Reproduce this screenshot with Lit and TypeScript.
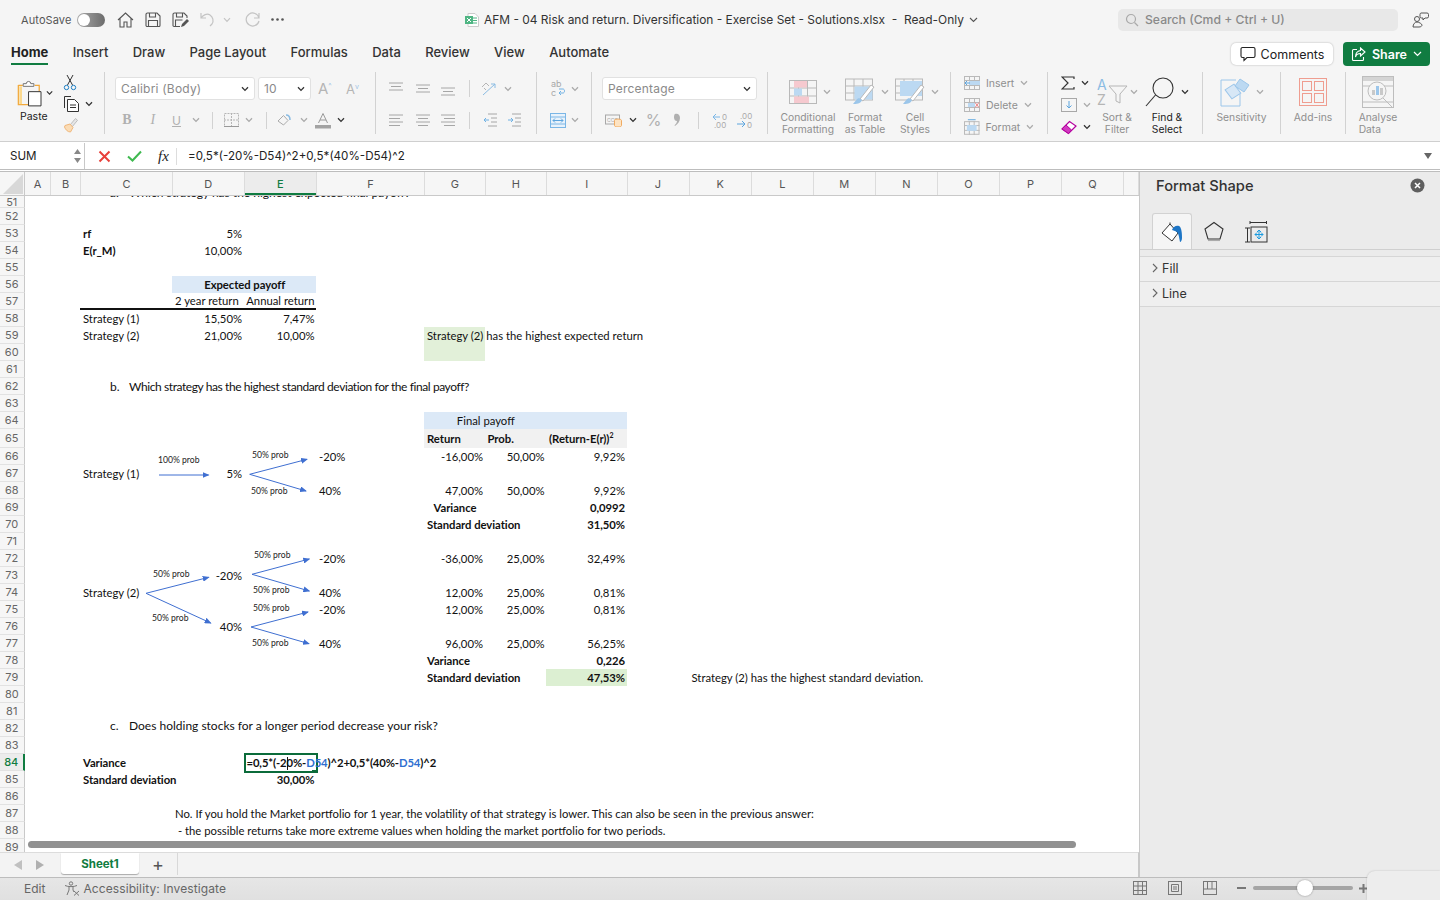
import { LitElement, html, svg, css } from "lit";
import { customElement } from "lit/decorators.js";

const UI = `Inter, "Liberation Sans", sans-serif`;

const chev = (dark = false) => html`<svg width="8" height="6" viewBox="0 0 8 6" fill="none" stroke=${dark ? "#333" : "#aaa"} stroke-width="1.3"><path d="M1 1.2 4 4.4 7 1.2" /></svg>`;

const lines = (y: number[], x: [number, number][]) => html`<svg width="16" height="16" viewBox="0 0 16 16" stroke="#a6a6a6" stroke-width="1">${y.map((v, i) => svg`<line x1=${x[i][0]} x2=${x[i][1]} y1=${v} y2=${v}></line>`)}</svg>`;

@customElement("xl-ribbon")
export class XlRibbon extends LitElement {
  static styles = css`
    :host {
      display: flex;
      height: 76px;
      box-sizing: border-box;
      padding-top: 6px;
      background: #f5f5f5;
      border-bottom: 1px solid #cfcfcf;
      font-family: Inter, "Liberation Sans", sans-serif;
      color: #8f8f8f;
      font-size: 10.3px;
    }
    .group {
      height: 62px;
      border-right: 1px solid #d2d2d2;
      display: flex;
      flex: none;
      box-sizing: content-box;
    }
    .g-clip { width: 104px; }
    .g-font { width: 270px; }
    .g-align { width: 160px; }
    .g-wrap { width: 54px; }
    .g-num { width: 175px; }
    .g-styles { width: 279px; }
    .g-edit { width: 154px; }
    .g-sens { width: 77px; }
    .g-add { width: 64px; }
    .g-ana { width: 64px; border-right: 0; }

    .paste {
      margin-left: 17px;
      width: 36px;
      display: flex;
      flex-direction: column;
      color: #222;
    }
    .paste-top { display: flex; align-items: center; gap: 4px; height: 39px; padding-top: 3px; box-sizing: border-box; }
    .paste span { margin-left: 3px; font-size: 10.5px; line-height: 12px; }
    .clip-tools { margin-left: 10px; display: flex; flex-direction: column; gap: 4px; padding-top: 2px; }
    .clip-tools div { height: 17px; display: flex; align-items: center; gap: 5px; }

    .stack { display: flex; flex-direction: column; gap: 8.5px; padding-top: 5px; }
    .r { height: 23px; display: grid; align-items: center; justify-items: center; }
    .sel {
      background: #fff;
      border: 1px solid #e1e1e1;
      border-radius: 3px;
      height: 23px;
      box-sizing: border-box;
      display: flex;
      align-items: center;
      justify-content: space-between;
      padding: 0 5px;
      font-size: 12px;
      color: #8a8a8a;
      letter-spacing: 0.2px;
    }
    .font-top { display: flex; align-items: center; padding-left: 10px; }
    .font-top .s1 { width: 140px; margin-right: 3px; }
    .font-top .s2 { width: 53px; margin-right: 7px; }
    .grow { font-size: 15px; color: #b5b5b5; width: 28px; }
    .shrink { font-size: 13px; color: #b5b5b5; width: 20px; }
    .grow sup, .shrink sup { font-size: 7px; color: #9cc3e6; }
    .font-bot { padding-left: 9px; grid-template-columns: 26px 25.5px 22px 16.5px 17.5px 19.5px 16px 18px 19.5px 18.5px 19px 18px; font-size: 13px; color: #b0b0b0; }
    .vsep { width: 1px; height: 17px; background: #d2d2d2; }
    .b { font-weight: 700; font-family: "Liberation Serif", serif; font-size: 14px; }
    .i { font-style: italic; font-family: "Liberation Serif", serif; font-size: 14px; }
    .u { text-decoration: underline; font-size: 12px; }

    .align-top { padding-left: 7px; grid-template-columns: 26.5px 26.5px 23px 20px 20px 18px; }
    .align-bot { padding-left: 7px; grid-template-columns: 26.5px 26.5px 23px 20px 22px 26px; }
    .wrap-row { padding-left: 12px; grid-template-columns: 18px 16px; }
    .num-top { padding-left: 10px; display: flex; align-items: center; }
    .num-top .sel { width: 155px; }
    .num-bot { padding-left: 12px; grid-template-columns: 19px 19px 23px 23.5px 20px 23px 26.5px; font-size: 16px; color: #b0b0b0; }

    .bigs { display: flex; padding-left: 10px; width: 172px; flex: none; border-right: 1px solid #d2d2d2; }
    .big { display: flex; flex-direction: column; align-items: center; text-align: center; line-height: 12px; flex: none; }
    .big-top { height: 39px; display: flex; align-items: center; gap: 6px; flex: none; }
    .nudge { margin-left: 4px; }
    .tight { gap: 2px; }
    .w60 { width: 60px; }
    .w54 { width: 54px; }
    .w46 { width: 46px; }
    .dark { color: #222; }

    .cellcol { display: flex; flex-direction: column; padding: 0 0 0 13px; }
    .cellcol div { height: 22px; flex: none; display: flex; align-items: center; gap: 6px; font-size: 10.5px; width: 70px; }
    .edit-col { display: flex; flex-direction: column; padding-left: 13px; width: 37px; flex: none; }
    .edit-col div { height: 22px; flex: none; display: flex; align-items: center; gap: 6px; }
    .e-big { width: 38px; }
    .e-big2 { width: 52px; margin-left: 5px; }
    .single { flex: 1; display: flex; flex-direction: column; align-items: center; line-height: 12px; }
  `;

  render() {
    return html`
      <div class="group g-clip">
        <div class="paste">
          <div class="paste-top">
            <svg width="28" height="30" viewBox="0 0 28 30" fill="none">
              <path d="M1.5 6.5h5M20 6.5h5v7" stroke="#f2a93b" stroke-width="1.4" />
              <path d="M1.5 6v22h11" stroke="#f2a93b" stroke-width="1.4" />
              <path d="M2.6 7.5h3v20h-3z" fill="#fbd98f" />
              <path d="M7 6.5V4.5h3.5a2.5 2.5 0 0 1 5 0H19v3H7z" fill="#fff" stroke="#666" stroke-width="1" />
              <path d="M13 13.5h14v16H13z" fill="#fff" stroke="#333" stroke-width="1.1" />
            </svg>
            ${chev(true)}
          </div>
          <span>Paste</span>
        </div>
        <div class="clip-tools">
          <div>
            <svg width="14" height="17" viewBox="0 0 14 17" fill="none" stroke="#333" stroke-width="1">
              <path d="M4 1l5.5 10M10 1 4.5 11" />
              <circle cx="3.5" cy="13.5" r="2.2" stroke="#1d7fc4" />
              <circle cx="10.5" cy="13.5" r="2.2" stroke="#1d7fc4" />
            </svg>
          </div>
          <div>
            <svg width="17" height="17" viewBox="0 0 17 17" fill="none" stroke="#333" stroke-width="1">
              <path d="M1.5 13V1.5H8" />
              <path d="M4.5 4.5h7l4 4v8h-11z" fill="#fff" />
              <path d="M7 10h6M7 12.5h6" />
            </svg>
            ${chev(true)}
          </div>
          <div>
            <svg width="16" height="16" viewBox="0 0 16 16" fill="none">
              <path d="M7 8 12.5 1.5l2 1.8L9 10z" stroke="#bdbdbd" fill="#e6e6e6" />
              <path d="M2 8.5 7 7l3 3.5-2.5 4.5c-3 0-5-2.5-6-5z" fill="#fbdcb5" stroke="#f0b77a" />
            </svg>
          </div>
        </div>
      </div>

      <div class="group g-font">
        <div class="stack">
          <div class="font-top">
            <div class="sel s1">Calibri (Body) ${chev(true)}</div>
            <div class="sel s2">10 ${chev(true)}</div>
            <span class="grow">A<sup>^</sup></span>
            <span class="shrink">A<sup>v</sup></span>
          </div>
          <div class="r font-bot">
            <span class="b">B</span>
            <span class="i">I</span>
            <span class="u">U</span>
            ${chev()}
            <div class="vsep"></div>
            <svg width="17" height="16" viewBox="0 0 17 16" fill="none" stroke="#b5b5b5"><path d="M1.5 1.5h14v13h-14z" stroke-dasharray="2 1" /><path d="M8.5 1v14M1 8h15" stroke-dasharray="2 1" /><path d="M1 14.5h15" stroke="#999" /></svg>
            ${chev()}
            <div class="vsep"></div>
            <svg width="15" height="15" viewBox="0 0 15 15" fill="none"><path d="M1 8 6.5 2.5 11 7.5 6.5 12z" stroke="#aaa" /><path d="M9 2c2.5 0 4 2 4 5" stroke="#8bbce3" stroke-width="1.6" /></svg>
            ${chev()}
            <svg width="16" height="17" viewBox="0 0 16 17" fill="none"><path d="M3.5 11 8 1.5 12.5 11M5 8h6" stroke="#999" /><rect x="0" y="13" width="16" height="3.5" fill="#a3a3a3" /></svg>
            ${chev(true)}
          </div>
        </div>
      </div>

      <div class="group g-align">
        <div class="stack">
          <div class="r align-top">
            ${lines([2, 5.5, 9], [[1, 15], [3, 13], [1, 15]])}
            ${lines([4, 7.5, 11], [[1, 15], [3, 13], [1, 15]])}
            ${lines([7, 10.5, 14], [[1, 15], [3, 13], [1, 15]])}
            <div class="vsep"></div>
            <svg width="17" height="15" viewBox="0 0 17 15" fill="none"><path d="M2 14 14 3M14 3h-4M14 3v4" stroke="#8bbce3" /><path d="M1 6 5 2l3 3M3 7l2 2" stroke="#b5b5b5" /></svg>
            ${chev()}
          </div>
          <div class="r align-bot">
            ${lines([3, 6.5, 10, 13.5], [[1, 15], [1, 12], [1, 15], [1, 12]])}
            ${lines([3, 6.5, 10, 13.5], [[1, 15], [3, 13], [1, 15], [3, 13]])}
            ${lines([3, 6.5, 10, 13.5], [[1, 15], [4, 15], [1, 15], [4, 15]])}
            <div class="vsep"></div>
            <svg width="15" height="14" viewBox="0 0 15 14" fill="none"><path d="M5 1h9M8 5h6M8 9h6M5 13h9" stroke="#a6a6a6" /><path d="M1 7h5M1 7l2-2M1 7l2 2" stroke="#6fb1e4" /></svg>
            <svg width="15" height="14" viewBox="0 0 15 14" fill="none"><path d="M5 1h9M8 5h6M8 9h6M5 13h9" stroke="#a6a6a6" /><path d="M1 7h5M6 7 4 5M6 7 4 9" stroke="#6fb1e4" /></svg>
          </div>
        </div>
      </div>

      <div class="group g-wrap">
        <div class="stack">
          <div class="r wrap-row">
            <svg width="16" height="19" viewBox="0 0 16 19" fill="none"><text x="1" y="8" font-size="9" fill="#a8a8a8" font-family=${UI}>ab</text><text x="1" y="17" font-size="9" fill="#a8a8a8" font-family=${UI}>c</text><path d="M9 14h4c2 0 2-4 0-4H9M9 14l2-2M9 14l2 2" stroke="#6fb1e4" /></svg>
            ${chev()}
          </div>
          <div class="r wrap-row">
            <svg width="16" height="15" viewBox="0 0 16 15" fill="none"><rect x="0.5" y="0.5" width="15" height="14" stroke="#7ab6e6" fill="#e8f2fb" /><path d="M0 4h16M0 11h16" stroke="#7ab6e6" /><path d="M3 7.5h10M3 7.5l2-2M3 7.5l2 2M13 7.5l-2-2M13 7.5l-2 2" stroke="#5da5de" /></svg>
            ${chev()}
          </div>
        </div>
      </div>

      <div class="group g-num">
        <div class="stack">
          <div class="num-top"><div class="sel">Percentage ${chev(true)}</div></div>
          <div class="r num-bot">
            <svg width="17" height="14" viewBox="0 0 17 14" fill="none"><rect x="0.5" y="2" width="14" height="9" stroke="#a8a8a8" /><text x="2" y="9" font-size="5" fill="#a8a8a8" font-family=${UI}>CCC</text><ellipse cx="13" cy="7.5" rx="3.5" ry="1.5" fill="#fde3c2" stroke="#f0ab62" /><path d="M9.5 7.5v5c0 2 7 2 7 0v-5" fill="#fde3c2" stroke="#f0ab62" /></svg>
            ${chev(true)}
            <span>%</span>
            <svg width="8" height="14" viewBox="0 0 8 14"><path d="M2 1c3-1 5 1 5 4 0 3-2 6-5 8l-.5-.8C3 11 4 9.5 4 8 2.5 8 1 7 1 4.5 1 3 1.2 1.5 2 1z" fill="#b0b0b0" /></svg>
            <div class="vsep"></div>
            <svg width="17" height="17" viewBox="0 0 17 17" fill="none"><path d="M1 5h7M1 5l3-3M1 5l3 3" stroke="#7ab6e6" /><text x="10" y="8" font-size="8" fill="#aaa" font-family=${UI}>0</text><text x="2" y="16" font-size="8" fill="#aaa" font-family=${UI}>.00</text></svg>
            <svg width="17" height="17" viewBox="0 0 17 17" fill="none"><text x="4" y="7" font-size="8" fill="#aaa" font-family=${UI}>.00</text><path d="M1 12h8M9 12 6 9M9 12l-3 3" stroke="#5da5de" /><text x="11" y="16" font-size="8" fill="#aaa" font-family=${UI}>0</text></svg>
          </div>
        </div>
      </div>

      <div class="group g-styles">
        <div class="bigs">
          <div class="big w60">
            <div class="big-top nudge">
              <svg width="28" height="24" viewBox="0 0 28 24" fill="none" stroke="#b9b9b9"><rect x="0.5" y="0.5" width="27" height="23" /><path d="M9.5 0v24M18.5 0v24M0 8h28M0 16h28" /><rect x="5" y="1" width="13" height="6.5" fill="#f6c9cf" stroke="none" /><rect x="5" y="8.5" width="8" height="7" fill="#bcd9f2" stroke="none" /><rect x="5" y="16.5" width="15" height="6.5" fill="#f6c9cf" stroke="none" /></svg>
              ${chev()}
            </div>
            Conditional<br />Formatting
          </div>
          <div class="big w54">
            <div class="big-top nudge">
              <svg width="30" height="27" viewBox="0 0 30 27" fill="none" stroke="#b9b9b9"><rect x="0.5" y="1" width="27" height="21" /><path d="M9 1v21M18 1v21M0 8h28M0 15h28" /><rect x="9.5" y="8.5" width="18" height="13" fill="#bcd9f2" stroke="none" /><path d="M15 21 26 7l3 2-11 14z" fill="#fff" /><path d="M8 26c3 0 8 0 9-4l-3-2c-3 1-4 4-6 6z" fill="#9cc6ea" stroke="none" /></svg>
              ${chev()}
            </div>
            Format<br />as Table
          </div>
          <div class="big w46">
            <div class="big-top nudge">
              <svg width="30" height="27" viewBox="0 0 30 27" fill="none" stroke="#b9b9b9"><rect x="0.5" y="1" width="27" height="21" /><path d="M0 8h28M0 15h28M9 1v5M18 1v5" /><rect x="5" y="3" width="22" height="15" fill="#bcd9f2" stroke="none" /><path d="M15 21 26 7l3 2-11 14z" fill="#fff" /><path d="M8 26c3 0 8 0 9-4l-3-2c-3 1-4 4-6 6z" fill="#9cc6ea" stroke="none" /></svg>
              ${chev()}
            </div>
            Cell<br />Styles
          </div>
        </div>
        <div class="cellcol">
          <div>
            <svg width="16" height="14" viewBox="0 0 16 14" fill="none" stroke="#b9b9b9"><rect x="0.5" y="0.5" width="15" height="13" /><path d="M5.5 0v14M10.5 0v14M0 4.5h16M0 9.5h16" /><rect x="5" y="5" width="11" height="4" fill="#bcd9f2" stroke="none" /><path d="M1 7h5M1 7l2-2M1 7l2 2" stroke="#5da5de" /></svg>
            Insert ${chev()}
          </div>
          <div>
            <svg width="16" height="14" viewBox="0 0 16 14" fill="none" stroke="#b9b9b9"><rect x="0.5" y="0.5" width="15" height="13" /><path d="M5.5 0v14M10.5 0v14M0 4.5h16M0 9.5h16" /><rect x="4" y="5" width="7" height="4" fill="#bcd9f2" stroke="none" /><path d="M11 4.5l4 5M15 4.5l-4 5" stroke="#e88" /></svg>
            Delete ${chev()}
          </div>
          <div>
            <svg width="16" height="16" viewBox="0 0 16 16" fill="none" stroke="#b9b9b9"><rect x="0.5" y="2.5" width="15" height="13" /><path d="M5.5 2v14M10.5 2v14M0 6.5h16M0 11.5h16" /><rect x="3" y="6" width="10" height="6" fill="#bcd9f2" stroke="none" /><path d="M4 .5h8" stroke="#5da5de" /></svg>
            Format ${chev()}
          </div>
        </div>
      </div>

      <div class="group g-edit">
        <div class="edit-col">
          <div>
            <svg width="14" height="14" viewBox="0 0 14 14" fill="none" stroke="#333" stroke-width="1.2"><path d="M13 3V1H1l6 6-6 6h12v-2" /></svg>
            ${chev(true)}
          </div>
          <div>
            <svg width="16" height="14" viewBox="0 0 16 14" fill="none"><rect x="0.5" y="0.5" width="15" height="13" stroke="#a8a8a8" /><path d="M8 3v7M8 10 5.5 7.5M8 10l2.5-2.5" stroke="#5da5de" /></svg>
            ${chev()}
          </div>
          <div>
            <svg width="16" height="15" viewBox="0 0 16 15" fill="none"><path d="M1 9 8.5 1.5 15 6 7.5 13.5z" fill="#fff" stroke="#b4009e" stroke-width="1.2" /><path d="M1 9 5 5l5.5 5-3 3.5z" fill="#d13ac0" stroke="#b4009e" /></svg>
            ${chev(true)}
          </div>
        </div>
        <div class="big e-big">
          <div class="big-top tight">
            <svg width="31" height="30" viewBox="0 0 31 30" fill="none"><text x="0" y="13" font-size="14" fill="#8bbce3" font-family=${UI}>A</text><text x="0" y="28" font-size="14" fill="#b5b5b5" font-family=${UI}>Z</text><path d="M12 9h18l-7 8v9l-4-2v-7z" stroke="#b5b5b5" /></svg>
            ${chev()}
          </div>
          Sort &amp;<br />Filter
        </div>
        <div class="big e-big2 dark">
          <div class="big-top">
            <svg width="30" height="30" viewBox="0 0 30 30" fill="none" stroke="#333" stroke-width="1.1"><circle cx="18" cy="11" r="10" /><path d="M10.5 18 1 29" /></svg>
            ${chev(true)}
          </div>
          Find &amp;<br />Select
        </div>
      </div>

      <div class="group g-sens">
        <div class="single">
          <div class="big-top">
            <svg width="30" height="30" viewBox="0 0 30 30" fill="none" stroke="#9cc6ea"><path d="M16 3H1v26h19v-12" /><path d="M5 14 13 7l8 8-8 7z" fill="#d7e7f6" transform="rotate(8 13 14)" /><path d="M20 2 29 8l-5 7-9-6z" fill="#bcd9f2" /></svg>
            ${chev()}
          </div>
          Sensitivity
        </div>
      </div>

      <div class="group g-add">
        <div class="single">
          <div class="big-top">
            <svg width="28" height="28" viewBox="0 0 28 28" fill="none" stroke="#ef9d90"><rect x="0.5" y="0.5" width="27" height="27" /><rect x="3.5" y="3.5" width="9" height="9" /><rect x="15.5" y="3.5" width="9" height="9" /><rect x="3.5" y="15.5" width="9" height="9" /><rect x="15.5" y="15.5" width="9" height="9" /></svg>
          </div>
          Add-ins
        </div>
      </div>

      <div class="group g-ana">
        <div class="single">
          <div class="big-top">
            <svg width="32" height="32" viewBox="0 0 32 32" fill="none" stroke="#bdbdbd"><rect x="0.5" y="0.5" width="31" height="31" /><rect x="1" y="1" width="30" height="4" fill="#d4d4d4" stroke="none" /><path d="M0 10h32M0 26h32" /><circle cx="15" cy="15" r="9" fill="#f5f5f5" /><rect x="10" y="14" width="3" height="5" fill="#c9c9c9" stroke="none" /><rect x="14" y="10" width="3" height="9" fill="#9cc6ea" stroke="none" /><rect x="18" y="12" width="3" height="7" fill="#c9c9c9" stroke="none" /><path d="M21 22l9 9" /></svg>
          </div>
          Analyse<br />Data
        </div>
      </div>
    `;
  }
}

type Cell = [number, string, unknown, string?, number?];

const COLS = "ABCDEFGHIJKLMNOPQ";
const LAST_ROW = 89;

const CELLS: Cell[] = [
  [51, "C", html`<span class="q-a">a.</span><span class="q-t">Which strategy has the highest expected final payoff?</span>`, "q up"],
  [53, "C", "rf", "bold"],
  [53, "D", "5%", "num"],
  [54, "C", "E(r_M)", "bold"],
  [54, "D", "10,00%", "num"],
  [56, "D", "Expected payoff", "bold mid blue", 2],
  [57, "C", "", "rule"],
  [57, "D", "2 year return", "rule"],
  [57, "E", "Annual return", "num rule"],
  [58, "C", "Strategy (1)"],
  [58, "D", "15,50%", "num"],
  [58, "E", "7,47%", "num"],
  [59, "C", "Strategy (2)"],
  [59, "D", "21,00%", "num"],
  [59, "E", "10,00%", "num"],
  [59, "G", "Strategy (2) has the highest expected return", "green"],
  [60, "G", "", "green"],
  [62, "C", html`<span class="q-a">b.</span><span class="q-t">Which strategy has the highest standard deviation for the final payoff?</span>`, "q narrow"],
  [64, "G", "Final payoff", "mid blue", 2],
  [64, "I", "", "blue"],
  [65, "G", "Return", "bold grey"],
  [65, "H", "Prob.", "bold grey"],
  [65, "I", html`<span>(Return-E(r))<sup>2</sup></span>`, "bold grey"],
  [66, "F", "-20%"],
  [66, "G", "-16,00%", "num"],
  [66, "H", "50,00%", "num"],
  [66, "I", "9,92%", "num"],
  [67, "C", "Strategy (1)"],
  [67, "D", "5%", "num"],
  [68, "F", "40%"],
  [68, "G", "47,00%", "num"],
  [68, "H", "50,00%", "num"],
  [68, "I", "9,92%", "num"],
  [69, "G", "Variance", "bold mid"],
  [69, "I", "0,0992", "bold num"],
  [70, "G", "Standard deviation", "bold"],
  [70, "I", "31,50%", "bold num"],
  [72, "F", "-20%"],
  [72, "G", "-36,00%", "num"],
  [72, "H", "25,00%", "num"],
  [72, "I", "32,49%", "num"],
  [73, "D", "-20%", "num"],
  [74, "C", "Strategy (2)"],
  [74, "F", "40%"],
  [74, "G", "12,00%", "num"],
  [74, "H", "25,00%", "num"],
  [74, "I", "0,81%", "num"],
  [75, "F", "-20%"],
  [75, "G", "12,00%", "num"],
  [75, "H", "25,00%", "num"],
  [75, "I", "0,81%", "num"],
  [76, "D", "40%", "num"],
  [77, "F", "40%"],
  [77, "G", "96,00%", "num"],
  [77, "H", "25,00%", "num"],
  [77, "I", "56,25%", "num"],
  [78, "G", "Variance", "bold"],
  [78, "I", "0,226", "bold num"],
  [79, "G", "Standard deviation", "bold"],
  [79, "I", "47,53%", "bold num green2"],
  [79, "K", "Strategy (2) has the highest standard deviation."],
  [82, "C", html`<span class="q-a">c.</span><span class="q-t">Does holding stocks for a longer period decrease your risk?</span>`, "q up2"],
  [84, "C", "Variance", "bold"],
  [84, "E", html`<span class="etext">=0,5*(-2<span class="caret"></span>0%-<span class="ref">D54</span>)^2+0,5*(40%-<span class="ref">D54</span>)^2</span><span class="active"></span>`, "bold editing"],
  [85, "C", "Standard deviation", "bold"],
  [85, "E", "30,00%", "bold num"],
  [87, "D", "No. If you hold the Market portfolio for 1 year, the volatility of that strategy is lower. This can also be seen in the previous answer:"],
  [88, "D", " - the possible returns take more extreme values when holding the market portfolio for two periods.", "pre"],
];

const ARROWS = [
  [159, 475, 208.5, 475],
  [249.7, 474.3, 307, 459.3],
  [249.7, 474.3, 306, 491],
  [146, 593.3, 208.7, 577.3],
  [146, 593.3, 210.7, 623],
  [252, 574.3, 309.3, 559],
  [252, 574.3, 309.3, 591],
  [251, 627, 308, 612],
  [251, 627, 309, 643.7],
];

const PROBS: [number, number, string][] = [
  [158, 463, "100% prob"],
  [252, 458, "50% prob"],
  [251, 494, "50% prob"],
  [254, 558, "50% prob"],
  [253, 593, "50% prob"],
  [253, 611, "50% prob"],
  [252, 646, "50% prob"],
  [153, 577, "50% prob"],
  [152, 621, "50% prob"],
];

@customElement("xl-sheet")
export class XlSheet extends LitElement {
  static styles = css`
    :host {
      display: block;
      position: relative;
      width: 1139px;
      height: 680px;
      overflow: hidden;
      background: #fff;
      --rest: 30px 92px 71.5px 72.5px 108px 60.5px 61.5px 80.5px 62px 62.5px 61.5px 62.5px 62px 62px 62px 62px 15px;
    }
    .head {
      display: grid;
      grid-template-columns: 25px 26px var(--rest);
      height: 24px;
      background: #f6f6f6;
      border-bottom: 1px solid #c9c9c9;
      box-sizing: border-box;
      font: 11px Inter, "Liberation Sans", sans-serif;
      color: #555;
    }
    .head div {
      display: flex;
      align-items: center;
      justify-content: center;
      border-right: 1px solid #dcdcdc;
    }
    .head .corner { align-items: flex-end; justify-content: flex-end; border-right: 1px solid #c9c9c9; }
    .head .on {
      background: #ececec;
      color: #107c41;
      font-weight: 500;
      box-shadow: inset 0 -2px 0 #107c41;
    }
    .clip { height: 656px; overflow: hidden; }
    .grid {
      display: grid;
      grid-template-columns: 24.5px 25.5px var(--rest);
      grid-template-rows: 12.4px repeat(13, 17px) 19.1px repeat(24, 17px);
      font: 11.3px Lato, "Liberation Sans", sans-serif;
      color: #111;
    }
    .rh {
      grid-column: 1;
      display: flex;
      align-items: center;
      justify-content: center;
      background: #f6f6f6;
      border-right: 1px solid #c9c9c9;
      border-bottom: 1px solid #e2e2e2;
      box-sizing: border-box;
      font: 11px Inter, "Liberation Sans", sans-serif;
      color: #666;
      overflow: hidden;
    }
    .rh.on {
      background: #ececec;
      color: #107c41;
      font-weight: 500;
      border-right: 2px solid #107c41;
    }
    .c {
      display: flex;
      align-items: center;
      padding: 0 1.5px 0 3px;
      white-space: nowrap;
      min-width: 0;
      box-sizing: border-box;
    }
    .bold { font-weight: 700; letter-spacing: -0.05px; }
    .num { justify-content: flex-end; }
    .mid { justify-content: center; }
    .blue { background: #dce9f7; }
    .grey { background: #f1f1f1; }
    .green { background: #e2f0d9; }
    .green2 { background: #dcefd2; }
    .rule { border-bottom: 2px solid #111; }
    .pre { white-space: pre; }
    .q { font-size: 12px; padding-left: 30px; }
    .narrow { letter-spacing: -0.41px; }
    .q-a { width: 19px; flex: none; letter-spacing: 0; }
    .up { padding-bottom: 8px; align-items: flex-end; }
    .up2 { padding-bottom: 7px; }
    sup { font-size: 7px; line-height: 0; }
    .editing { position: relative; padding-left: 3px; letter-spacing: -0.12px; }
    .etext { position: relative; z-index: 1; }
    .ref { color: #2f6fd0; }
    .caret { display: inline-block; width: 1px; height: 13px; background: #111; vertical-align: middle; margin-right: -1px; }
    .active {
      position: absolute;
      left: 0;
      top: -1.5px;
      width: 74px;
      height: 20px;
      border: 2px solid #0b6b3a;
      box-sizing: border-box;
    }
    .active::after {
      content: "";
      position: absolute;
      right: -2px;
      bottom: -2px;
      width: 6px;
      height: 3px;
      background: #0b6b3a;
    }
    svg.shapes { position: absolute; left: 0; top: 24px; }
    .shapes text { font: 8.6px Lato, "Liberation Sans", sans-serif; fill: #222; }
    .scroll {
      position: absolute;
      left: 28px;
      top: 669px;
      width: 1048px;
      height: 7px;
      border-radius: 4px;
      background: #919191;
    }
  `;

  render() {
    const colIndex = (c: string) => COLS.indexOf(c) + 2;
    const rows: number[] = [];
    for (let r = 51; r <= LAST_ROW; r++) rows.push(r);
    return html`
      <div class="head">
        <div class="corner"><svg width="24" height="23" viewBox="0 0 24 23"><path d="M23 2v20H3z" fill="#d8d8d8" /></svg></div>
        ${COLS.split("").map((c) => html`<div class=${c === "E" ? "on" : ""}>${c}</div>`)}
        <div></div>
      </div>
      <div class="clip">
        <div class="grid">
          ${rows.map(
            (r) => html`<div class="rh ${r === 84 ? "on" : ""}" style="grid-row:${r - 50}">${r}</div>`
          )}
          ${CELLS.map(
            ([r, col, text, cls, span]) => html`<div
              class="c ${cls ?? ""}"
              style="grid-row:${r - 50};grid-column:${colIndex(col)} / span ${span ?? 1}"
            >${text}</div>`
          )}
        </div>
      </div>
      <svg class="shapes" width="1139" height="656" viewBox="0 196 1139 656">
        <defs>
          <marker id="tip" markerWidth="7" markerHeight="6" refX="6" refY="3" orient="auto" markerUnits="userSpaceOnUse">
            <path d="M0 0 7 3 0 6z" fill="#3f6fd1" />
          </marker>
        </defs>
        ${ARROWS.map(
          ([x1, y1, x2, y2]) => svg`<line x1=${x1} y1=${y1} x2=${x2} y2=${y2} stroke="#3f6fd1" stroke-width="1" marker-end="url(#tip)"></line>`
        )}
        ${PROBS.map(([x, y, t]) => svg`<text x=${x} y=${y}>${t}</text>`)}
      </svg>
      <div class="scroll"></div>
    `;
  }
}

@customElement("xl-pane")
export class XlPane extends LitElement {
  static styles = css`
    :host {
      display: block;
      width: 301px;
      height: 705px;
      box-sizing: border-box;
      background: #ebebeb;
      border-left: 1px solid #c8c8c8;
      font-family: Inter, "Liberation Sans", sans-serif;
      color: #333;
    }
    .title {
      display: flex;
      align-items: center;
      justify-content: space-between;
      height: 27px;
      padding: 0 15px 0 16px;
      font-size: 14.7px;
      font-weight: 500;
    }
    .tabs {
      display: flex;
      align-items: flex-end;
      gap: 2px;
      height: 51px;
      padding-left: 12px;
      border-bottom: 1px solid #cfcfcf;
      box-sizing: border-box;
    }
    .tab {
      width: 40px;
      height: 36px;
      display: flex;
      align-items: center;
      justify-content: center;
      box-sizing: border-box;
      flex: none;
      padding-top: 1px;
    }
    .tab.on {
      background: #f5f5f5;
      border: 1px solid #d2d2d2;
      border-bottom: 0;
      border-radius: 3px 3px 0 0;
    }
    .rows { margin-top: 6px; border-top: 1px solid #d6d6d6; }
    .row {
      height: 25px;
      box-sizing: border-box;
      display: flex;
      align-items: center;
      gap: 4px;
      padding: 0 0 2px 12px;
      background: #efefef;
      border-bottom: 1px solid #d6d6d6;
      font-size: 12.5px;
    }
  `;

  render() {
    const arrow = html`<svg width="6" height="10" viewBox="0 0 6 10" fill="none" stroke="#666" stroke-width="1.1"><path d="M1 1l4 4-4 4" /></svg>`;
    return html`
      <div class="title">
        Format Shape
        <svg width="15" height="15" viewBox="0 0 15 15"><circle cx="7.5" cy="7.5" r="7" fill="#5f5f5f" /><path d="M5 5l5 5M10 5l-5 5" stroke="#fff" stroke-width="1.5" /></svg>
      </div>
      <div class="tabs">
        <div class="tab on">
          <svg width="22" height="21" viewBox="0 0 22 21" fill="none">
            <path d="M1 11 9 2l8 9-6 8z" stroke="#333" fill="#fff" />
            <path d="M9 2V0.5" stroke="#333" />
            <path d="M11 8c1-3 4-5 7-4 2 1 3 5 3 12 0 2-1 4-2 4-1-4-1-8-3-10-1-1-3-1-5-2z" fill="#1e76c6" />
          </svg>
        </div>
        <div class="tab">
          <svg width="20" height="21" viewBox="0 0 20 21" fill="none" stroke="#333" stroke-width="1.1"><path d="M10 1.5 19 8l-3 10H4L1 8z" /><path d="M4 19.5h12" stroke="#aaa" /></svg>
        </div>
        <div class="tab">
          <svg width="24" height="23" viewBox="0 0 24 23" fill="none">
            <path d="M1 8h5M3.5 8v14M1 22h5M6 1v3M22.5 1v3M6 2.5h16.5" stroke="#333" />
            <rect x="7" y="7" width="16" height="15" stroke="#333" />
            <path d="M15 10v9M11 14.5h8M15 10l-2 2M15 10l2 2M15 19l-2-2M15 19l2-2M11 14.5l2-2M11 14.5l2 2M19 14.5l-2-2M19 14.5l-2 2" stroke="#1a9be0" />
          </svg>
        </div>
      </div>
      <div class="rows">
        <div class="row">${arrow} Fill</div>
        <div class="row">${arrow} Line</div>
      </div>
    `;
  }
}

@customElement("app-root")
export class AppRoot extends LitElement {
  static styles = css`
    :host {
      display: block;
      position: relative;
      width: 1440px;
      height: 900px;
      overflow: hidden;
      background: #f5f5f5;
      font-family: Inter, "Liberation Sans", sans-serif;
      color: #333;
    }
    .titlebar {
      display: flex;
      align-items: center;
      height: 40px;
      padding: 0 0 1px 21px;
      box-sizing: border-box;
      font-size: 11px;
    }
    .autosave { color: #555; width: 56px; flex: none; letter-spacing: 0.1px; }
    .toggle {
      width: 28px;
      height: 14px;
      border-radius: 7px;
      background: linear-gradient(90deg, #aaa, #6c6c6c);
      display: flex;
      align-items: center;
      padding-left: 1px;
      box-sizing: border-box;
      flex: none;
      margin-right: 12px;
    }
    .toggle i { width: 12px; height: 12px; background: #fff; border-radius: 50%; }
    .qa { display: flex; align-items: center; flex: none; width: 168px; }
    .qa svg { flex: none; }
    .qa .g1 { margin-right: 11px; }
    .qa .g2 { margin-right: 11px; }
    .qa .g3 { margin-right: 11px; }
    .qa .g4 { margin-right: 8px; }
    .qa .g5 { margin-right: 14px; }
    .doc {
      margin-left: 180px;
      display: flex;
      align-items: center;
      gap: 5px;
      width: 653px;
      flex: none;
      font-size: 11.95px;
      white-space: pre;
      color: #333;
    }
    .search {
      width: 280px;
      height: 22px;
      flex: none;
      border-radius: 5px;
      background: #e8e8e8;
      display: flex;
      align-items: center;
      gap: 6px;
      padding-left: 7px;
      box-sizing: border-box;
      font-size: 12.2px;
      font-weight: 500;
      color: #8a8a8a;
      margin-right: 14px;
    }
    .tabsrow {
      display: flex;
      align-items: flex-start;
      height: 26px;
      padding: 0 10px 0 11px;
      font-size: 13px;
      font-weight: 500;
      gap: 24.35px;
      color: #333;
      white-space: nowrap;
    }
    .tabsrow .t { height: 25px; line-height: 25px; box-sizing: border-box; }
    .tabsrow .on { color: #222; font-weight: 700; border-bottom: 2.5px solid #107c41; }
    .actions { margin-left: auto; display: flex; align-items: flex-start; gap: 10px; margin-top: 2px; }
    .comments {
      width: 102px;
      height: 22px;
      margin-top: 1px;
      background: #fff;
      border-radius: 5px;
      box-shadow: 0 0 2px rgba(0, 0, 0, 0.3);
      display: flex;
      align-items: center;
      justify-content: center;
      gap: 5px;
      font-size: 12.5px;
      font-weight: 400;
      color: #222;
    }
    .share {
      width: 87px;
      height: 24px;
      background: #107c41;
      border-radius: 4px;
      color: #fff;
      display: flex;
      align-items: center;
      justify-content: center;
      gap: 6px;
      font-size: 12.5px;
      font-weight: 600;
    }
    .formula {
      display: flex;
      align-items: center;
      height: 26px;
      padding-top: 1px;
      background: #fff;
      border-bottom: 3px double #bdbdbd;
      box-sizing: content-box;
      font-size: 11.6px;
      color: #222;
    }
    .name {
      width: 85px;
      flex: none;
      height: 100%;
      box-sizing: border-box;
      border-right: 1px solid #c8c8c8;
      display: flex;
      align-items: center;
      justify-content: space-between;
      padding: 0 2px 0 10px;
    }
    .fx-btns { display: flex; align-items: center; gap: 16px; width: 95px; padding-left: 13px; box-sizing: border-box; flex: none; height: 100%; }
    .fx { font: italic 15px "Liberation Serif", serif; padding-right: 7px; border-right: 1px solid #ddd; line-height: 17px; }
    .ftext { flex: 1; padding-left: 8px; }
    .fdrop { margin-right: 8px; width: 0; height: 0; border: 4px solid transparent; border-top: 6px solid #666; border-bottom: 0; }
    .work { display: flex; height: 705px; }
    .tabbar {
      position: absolute;
      left: 0;
      top: 852px;
      width: 1139px;
      height: 25px;
      background: #f3f3f3;
      border-top: 1px solid #dcdcdc;
      box-sizing: border-box;
      display: flex;
      align-items: flex-start;
      border-right: 1px solid #c8c8c8;
    }
    .nav { display: flex; gap: 14px; padding: 7px 0 0 14px; width: 61px; box-sizing: border-box; flex: none; }
    .sheet-tab {
      width: 78px;
      height: 21px;
      background: #fff;
      border-radius: 0 0 3px 3px;
      box-shadow: 0 1px 1px rgba(0, 0, 0, 0.3);
      display: flex;
      align-items: center;
      justify-content: center;
      color: #107c41;
      font-weight: 700;
      font-size: 11.5px;
      flex: none;
    }
    .plus { width: 38px; height: 22px; flex: none; display: flex; align-items: center; justify-content: center; border-right: 1px solid #d8d8d8; font-size: 18px; color: #555; }
    .status {
      position: absolute;
      left: 0;
      top: 877px;
      width: 1440px;
      height: 23px;
      box-sizing: border-box;
      background: linear-gradient(#e6e6e6, #e0e0e0);
      border-top: 1px solid #bdbdbd;
      display: flex;
      align-items: center;
      padding: 0 0 2px 24px;
      font-size: 12px;
      color: #666;
    }
    .acc { display: flex; align-items: center; gap: 3px; margin-left: 19px; letter-spacing: 0.1px; }
    .views { margin-left: auto; display: flex; align-items: center; gap: 21px; margin-right: 72px; }
    .zoom { display: flex; align-items: center; gap: 6px; margin-left: -1px; }
    .zline { width: 100px; height: 4px; border-radius: 2px; background: #a5a5a5; display: flex; align-items: center; }
    .knob { width: 16px; height: 16px; border-radius: 50%; background: #fff; box-shadow: 0 0 2px rgba(0, 0, 0, 0.4); margin-left: 44px; flex: none; }
    .corner {
      position: absolute;
      right: 0;
      bottom: 0;
      width: 73px;
      height: 29px;
      background: #ededed;
      border-radius: 8px 0 0 0;
      box-shadow: 0 0 2px rgba(0, 0, 0, 0.2);
    }
  `;

  render() {
    const tabs = ["Insert", "Draw", "Page Layout", "Formulas", "Data", "Review", "View", "Automate"];
    return html`
      <div class="titlebar">
        <span class="autosave">AutoSave</span>
        <div class="toggle"><i></i></div>
        <div class="qa">
          <svg class="g1" width="17" height="16" viewBox="0 0 17 16" fill="none" stroke="#555" stroke-width="1.1"><path d="M1 8 8.5 1 16 8M3 6.5V15h4v-5h3v5h4V6.5" /></svg>
          <svg class="g2" width="16" height="15" viewBox="0 0 16 15" fill="none" stroke="#555" stroke-width="1.1"><path d="M1 2.5A1.5 1.5 0 0 1 2.5 1h9.5l3 3v9.5a1 1 0 0 1-1 1H2a1 1 0 0 1-1-1z" /><path d="M4.5 1v4h6V1M3.5 14.5v-6h9v6" /></svg>
          <svg class="g3" width="17" height="16" viewBox="0 0 17 16" fill="none" stroke="#555" stroke-width="1.1"><path d="M8 14.5H2a1 1 0 0 1-1-1V2.5A1.5 1.5 0 0 1 2.5 1H12l3 3v2" /><path d="M4.5 1v4h6V1M3.5 14v-6h7" /><path d="M9 15l1-3 5-5 2 2-5 5z" fill="#555" stroke="none" /></svg>
          <svg class="g4" width="15" height="15" viewBox="0 0 15 15" fill="none" stroke="#c4c4c4" stroke-width="1.2"><path d="M1 1v5h5M1 6c2-3 6-5 9-3 3 2 4 6 2 9l-2 2" /></svg>
          <svg class="g5" width="8" height="6" viewBox="0 0 8 6" fill="none" stroke="#c4c4c4" stroke-width="1.2"><path d="M1 1.2 4 4.4 7 1.2" /></svg>
          <svg class="g3" width="15" height="15" viewBox="0 0 15 15" fill="none" stroke="#c4c4c4" stroke-width="1.2"><path d="M14 1v5h-5M14 6A6.5 6.5 0 1 0 14 9" /></svg>
          <svg width="13" height="3" viewBox="0 0 13 3" fill="#555"><circle cx="1.5" cy="1.5" r="1.3" /><circle cx="6.5" cy="1.5" r="1.3" /><circle cx="11.5" cy="1.5" r="1.3" /></svg>
        </div>
        <div class="doc">
          <svg width="14" height="14" viewBox="0 0 14 14" fill="none"><path d="M3 .5h7l3.5 3.5v9.5H3z" fill="#fff" stroke="#ccc" /><path d="M8 5h4M8 7.5h4M8 10h4" stroke="#4fb583" /><rect x="0" y="3" width="8" height="8" fill="#4fb583" /><path d="M2 5l4 4M6 5 2 9" stroke="#fff" /></svg>
          <span>AFM - 04 Risk and return. Diversification - Exercise Set - Solutions.xlsx  -  Read-Only</span>
          <svg width="9" height="6" viewBox="0 0 9 6" fill="none" stroke="#555" stroke-width="1.1"><path d="M1 1l3.5 3.5L8 1" /></svg>
        </div>
        <div class="search">
          <svg width="14" height="14" viewBox="0 0 14 14" fill="none" stroke="#aaa" stroke-width="1.2"><circle cx="6" cy="6" r="4.5" /><path d="M9.5 9.5 13 13" /></svg>
          Search (Cmd + Ctrl + U)
        </div>
        <svg width="17" height="16" viewBox="0 0 17 16" fill="none" stroke="#555" stroke-width="1"><circle cx="5" cy="7" r="2.5" /><path d="M1 15c0-3 2-5 4-5s5 2 5 3c0 1-1 2-3 2z" /><path d="M9 1h6a1.5 1.5 0 0 1 1.5 1.5v2A1.5 1.5 0 0 1 15 6h-2l-2 2V6H9.5A1.5 1.5 0 0 1 8 4.5v-2A1.5 1.5 0 0 1 9 1z" /></svg>
      </div>

      <div class="tabsrow">
        <div class="t on">Home</div>
        ${tabs.map((t) => html`<div class="t">${t}</div>`)}
        <div class="actions">
          <div class="comments">
            <svg width="16" height="16" viewBox="0 0 16 16" fill="none" stroke="#222" stroke-width="1.1"><path d="M2.5 1.5h11a1.5 1.5 0 0 1 1.5 1.5v7a1.5 1.5 0 0 1-1.5 1.5H7l-3 3v-3H2.5A1.5 1.5 0 0 1 1 10V3a1.5 1.5 0 0 1 1.5-1.5z" /></svg>
            Comments
          </div>
          <div class="share">
            <svg width="15" height="15" viewBox="0 0 15 15" fill="none" stroke="#fff" stroke-width="1.1"><path d="M6 2.5H2.5a1 1 0 0 0-1 1v9a1 1 0 0 0 1 1h9a1 1 0 0 0 1-1V10" /><path d="M9.5 1 14 5l-4.5 4V6.5C7 6.5 5 8 4.5 10c0-4 2-6 5-6.5z" /></svg>
            Share
            <svg width="9" height="6" viewBox="0 0 9 6" fill="none" stroke="#fff" stroke-width="1.2"><path d="M1 1l3.5 3.5L8 1" /></svg>
          </div>
        </div>
      </div>

      <xl-ribbon></xl-ribbon>

      <div class="formula">
        <div class="name">
          SUM
          <svg width="9" height="16" viewBox="0 0 9 16" fill="#888"><path d="M4.5 1 8 6H1zM4.5 15 1 10h7z" /></svg>
        </div>
        <div class="fx-btns">
          <svg width="13" height="13" viewBox="0 0 13 13" fill="none" stroke="#e8403a" stroke-width="2"><path d="M1.5 1.5l10 10M11.5 1.5l-10 10" /></svg>
          <svg width="15" height="12" viewBox="0 0 15 12" fill="none" stroke="#3fb950" stroke-width="2"><path d="M1 6.5 5.5 10.5 14 1.5" /></svg>
          <span class="fx">fx</span>
        </div>
        <div class="ftext">=0,5*(-20%-D54)^2+0,5*(40%-D54)^2</div>
        <div class="fdrop"></div>
      </div>

      <div class="work">
        <xl-sheet></xl-sheet>
        <xl-pane></xl-pane>
      </div>

      <div class="tabbar">
        <div class="nav">
          <svg width="8" height="10" viewBox="0 0 8 10" fill="#c0c0c0"><path d="M8 0v10L0 5z" /></svg>
          <svg width="8" height="10" viewBox="0 0 8 10" fill="#b0b0b0"><path d="M0 0v10l8-5z" /></svg>
        </div>
        <div class="sheet-tab">Sheet1</div>
        <div class="plus">+</div>
      </div>

      <div class="status">
        Edit
        <div class="acc">
          <svg width="16" height="15" viewBox="0 0 16 15" fill="none" stroke="#777"><circle cx="7" cy="2.5" r="1.7" /><path d="M1 4.5c3 1.5 9 1.5 12 0M5 6v3l-2 5M9 6v3l1 2" /><path d="M10 10l5 4.5M15 10l-5 4.5" /></svg>
          Accessibility: Investigate
        </div>
        <div class="views">
          <svg width="14" height="14" viewBox="0 0 14 14" fill="none" stroke="#777"><rect x="0.5" y="0.5" width="13" height="13" /><path d="M5 0v14M9.5 0v14M0 5h14M0 9.5h14" /></svg>
          <svg width="14" height="14" viewBox="0 0 14 14" fill="none" stroke="#777"><rect x="0.5" y="0.5" width="13" height="13" /><path d="M3.5 3.5h7v7h-7zM5 6h4M5 8h4" /></svg>
          <svg width="14" height="14" viewBox="0 0 14 14" fill="none" stroke="#777"><rect x="0.5" y="0.5" width="13" height="13" /><path d="M4.5 0v8M9 0v8h5M0 8h9" /></svg>
          <div class="zoom">
            <svg width="10" height="2" viewBox="0 0 10 2"><rect width="9" height="2" fill="#777" /></svg>
            <div class="zline"><div class="knob"></div></div>
            <svg width="9" height="9" viewBox="0 0 9 9" fill="#777"><path d="M3.5 0h2v3.5H9v2H5.5V9h-2V5.5H0v-2h3.5z" /></svg>
          </div>
        </div>
      </div>
      <div class="corner"></div>
    `;
  }
}
